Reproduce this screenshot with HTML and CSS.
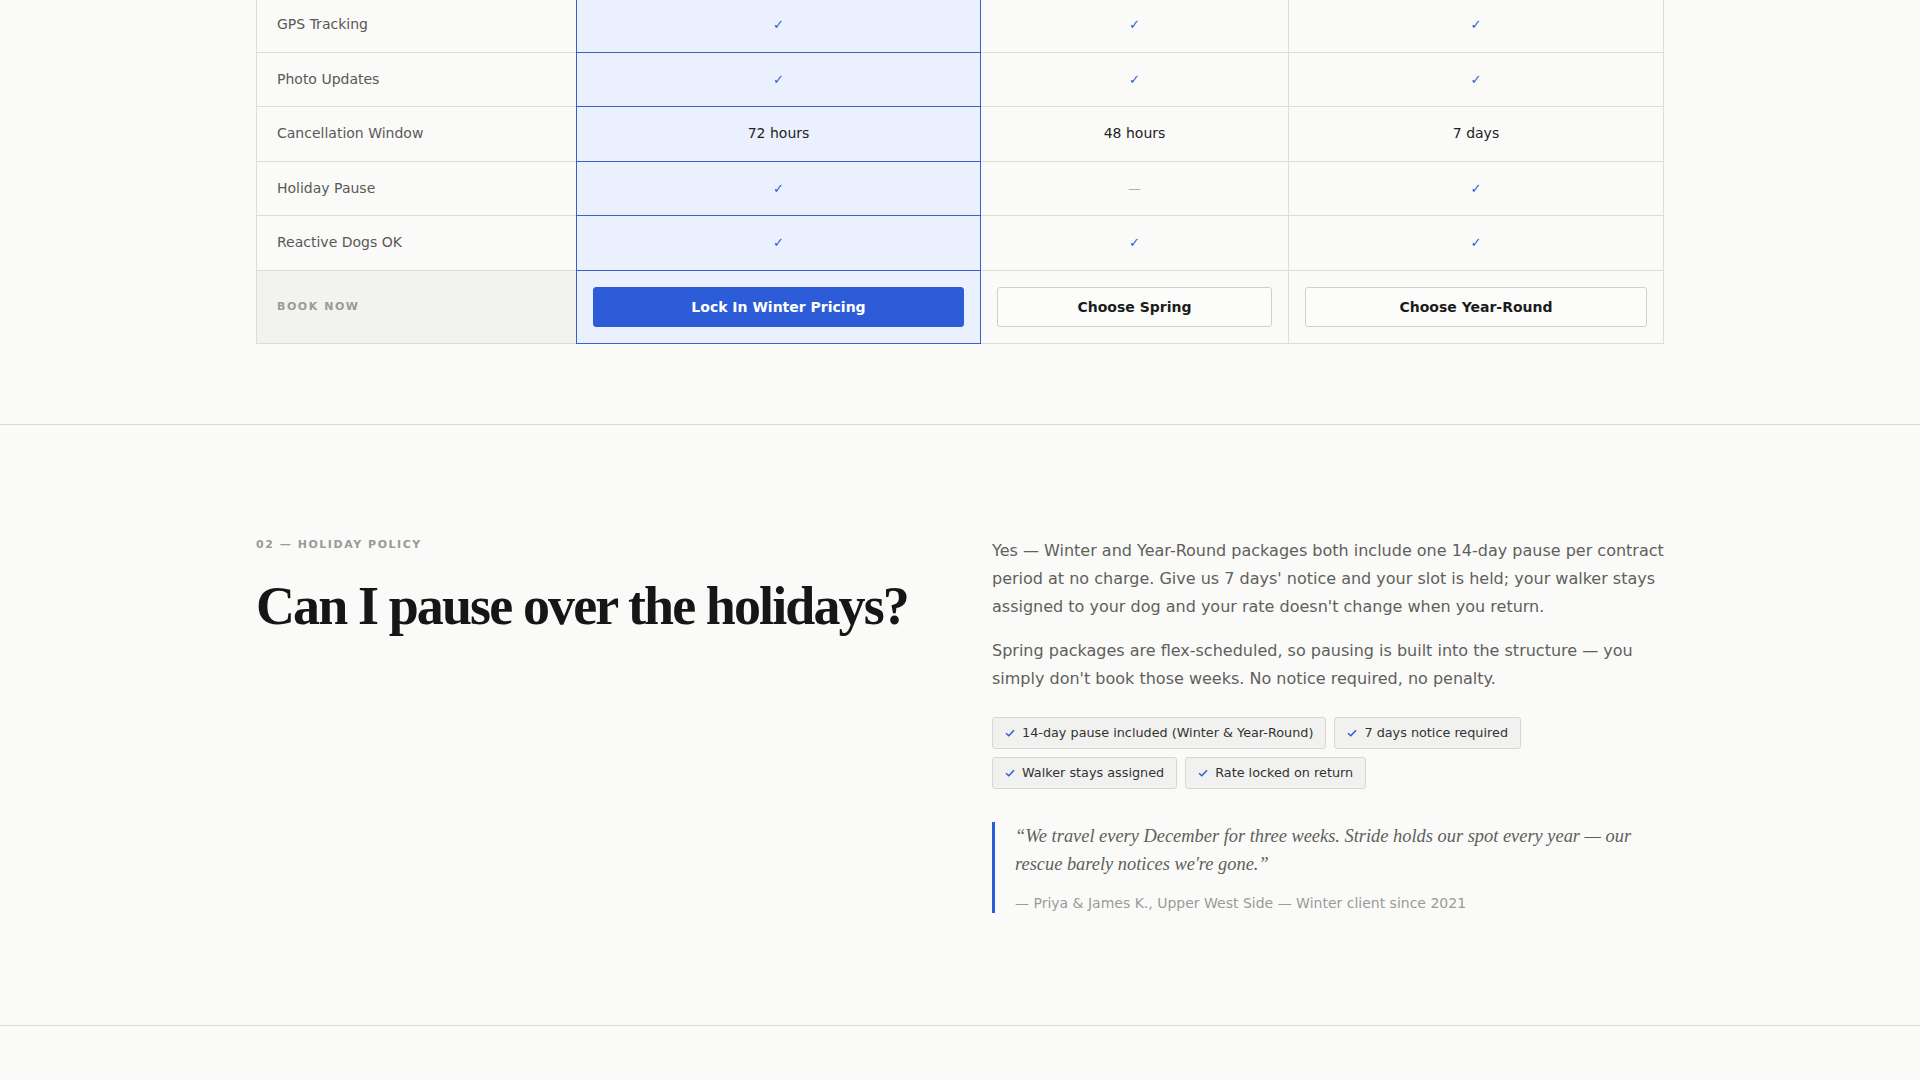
FILE: index.html
```html
<!DOCTYPE html>
<html>
<head lang="en">
    <meta charset="UTF-8">
    <title>Stride - Seasonal Packages</title>
    <link rel="stylesheet" href="styles.css">
</head>
<body>
<section class="compare">
    <div class="wrap">
        <table class="plans">
            <colgroup>
                <col class="col-feature">
                <col class="col-winter">
                <col class="col-spring">
                <col class="col-year">
            </colgroup>
            <tr>
                <td class="feature">GPS Tracking</td>
                <td class="hl"><span class="yes">&#10003;</span></td>
                <td><span class="yes">&#10003;</span></td>
                <td><span class="yes">&#10003;</span></td>
            </tr>
            <tr>
                <td class="feature">Photo Updates</td>
                <td class="hl"><span class="yes">&#10003;</span></td>
                <td><span class="yes">&#10003;</span></td>
                <td><span class="yes">&#10003;</span></td>
            </tr>
            <tr>
                <td class="feature">Cancellation Window</td>
                <td class="hl">72 hours</td>
                <td>48 hours</td>
                <td>7 days</td>
            </tr>
            <tr>
                <td class="feature">Holiday Pause</td>
                <td class="hl"><span class="yes">&#10003;</span></td>
                <td><span class="no">&mdash;</span></td>
                <td><span class="yes">&#10003;</span></td>
            </tr>
            <tr>
                <td class="feature">Reactive Dogs OK</td>
                <td class="hl"><span class="yes">&#10003;</span></td>
                <td><span class="yes">&#10003;</span></td>
                <td><span class="yes">&#10003;</span></td>
            </tr>
            <tr class="book">
                <td class="feature">Book now</td>
                <td class="hl"><button class="btn btn-primary">Lock In Winter Pricing</button></td>
                <td><button class="btn">Choose Spring</button></td>
                <td><button class="btn">Choose Year-Round</button></td>
            </tr>
        </table>
    </div>
</section>

<section class="faq">
    <div class="wrap faq-grid">
        <div class="faq-title">
            <div class="eyebrow">02 &mdash; Holiday Policy</div>
            <h2>Can I pause over the holidays?</h2>
        </div>
        <div class="faq-body">
            <p>Yes &mdash; Winter and Year-Round packages both include one 14-day pause per contract period at no charge. Give us 7 days' notice and your slot is held; your walker stays assigned to your dog and your rate doesn't change when you return.</p>
            <p>Spring packages are flex-scheduled, so pausing is built into the structure &mdash; you simply don't book those weeks. No notice required, no penalty.</p>
            <ul class="chips">
                <li><svg width="10" height="8" viewBox="0 0 10 8"><path d="M1 4.2 L3.8 6.8 L9 1.2" fill="none" stroke="#2c5cd8" stroke-width="1.5"/></svg>14-day pause included (Winter &amp; Year-Round)</li>
                <li><svg width="10" height="8" viewBox="0 0 10 8"><path d="M1 4.2 L3.8 6.8 L9 1.2" fill="none" stroke="#2c5cd8" stroke-width="1.5"/></svg>7 days notice required</li>
                <li><svg width="10" height="8" viewBox="0 0 10 8"><path d="M1 4.2 L3.8 6.8 L9 1.2" fill="none" stroke="#2c5cd8" stroke-width="1.5"/></svg>Walker stays assigned</li>
                <li><svg width="10" height="8" viewBox="0 0 10 8"><path d="M1 4.2 L3.8 6.8 L9 1.2" fill="none" stroke="#2c5cd8" stroke-width="1.5"/></svg>Rate locked on return</li>
            </ul>
            <blockquote class="quote">
                <p>&ldquo;We travel every December for three weeks. Stride holds our spot every year &mdash; our rescue barely notices we're gone.&rdquo;</p>
                <cite>&mdash; Priya &amp; James K., Upper West Side &mdash; Winter client since 2021</cite>
            </blockquote>
        </div>
    </div>
</section>
</body>
</html>
```

FILE: styles.css
```css
*{
    margin: 0;
    padding: 0;
    box-sizing: border-box;
}
body{
    background: #fafaf8;
    color: #222;
    font-family: "DejaVu Sans", sans-serif;
}
li{
    list-style: none;
}
.wrap{
    width: 1408px;
    margin: 0 auto;
}

/* comparison table */
.compare{
    margin-top: -2px;
    padding-bottom: 80px;
    border-bottom: 1px solid #d9d9d6;
}
.plans{
    width: 100%;
    table-layout: fixed;
    border-collapse: separate;
    border-spacing: 0;
    font-size: 14px;
}
.col-feature{ width: 320px; }
.col-winter{ width: 405px; }
.col-spring{ width: 308px; }
.col-year{ width: 375px; }
.plans td{
    padding: 18px 20px;
    line-height: 17.5px;
    text-align: center;
    color: #222;
    border-bottom: 1px solid #dcdcd9;
    border-right: 1px solid #dcdcd9;
}
.plans td.feature{
    text-align: left;
    color: #595956;
    border-left: 1px solid #dcdcd9;
    border-right: none;
}
.plans td.hl{
    background: #eaf0fd;
    border-left: 1px solid #3562c9;
    border-right: 1px solid #3562c9;
    border-bottom-color: #3562c9;
}
.plans td.hl + td{
    border-left: none;
}
.yes{
    color: #2c5cd8;
    font-size: 13px;
}
.no{
    color: #b0b0ad;
    font-size: 13px;
}
.plans .book td{
    padding: 16px;
}
.plans .book td.feature{
    background: #f2f2f0;
    padding-left: 20px;
    font-size: 11px;
    font-weight: bold;
    letter-spacing: 0.14em;
    text-transform: uppercase;
    color: #9a9a97;
}
.btn{
    display: block;
    width: 100%;
    height: 40px;
    font-family: "DejaVu Sans", sans-serif;
    font-size: 14px;
    font-weight: bold;
    color: #1c1c1c;
    background: #fcfcfb;
    border: 1px solid #cfcfcc;
    border-radius: 3px;
    cursor: pointer;
}
.btn-primary{
    background: #2c5cd8;
    border-color: #2c5cd8;
    color: #fff;
}

/* holiday policy */
.faq{
    padding: 112px 0;
    border-bottom: 1px solid #d9d9d6;
}
.faq-grid{
    display: grid;
    grid-template-columns: 1fr 1fr;
    gap: 64px;
    align-items: start;
}
.eyebrow{
    font-size: 11px;
    line-height: 16px;
    font-weight: bold;
    letter-spacing: 0.14em;
    text-transform: uppercase;
    color: #9a9a97;
}
.faq-title h2{
    margin-top: 24px;
    font-family: "Liberation Serif", "Times New Roman", serif;
    font-size: 54px;
    line-height: 1.1;
    letter-spacing: -0.035em;
    font-weight: bold;
    color: #161616;
}
.faq-body > p{
    font-size: 16px;
    line-height: 28px;
    color: #5f5f5c;
    margin-bottom: 16px;
}
.chips{
    display: flex;
    flex-wrap: wrap;
    gap: 8px;
    margin-top: 24px;
}
.chips li{
    display: flex;
    align-items: center;
    gap: 7px;
    height: 32px;
    padding: 0 12px;
    font-size: 12.8px;
    color: #333;
    background: #f1f1ef;
    border: 1px solid #d6d6d3;
    border-radius: 3px;
}
.quote{
    margin-top: 33px;
    padding-left: 20px;
    border-left: 3px solid #2c5cd8;
}
.quote p{
    font-family: "Liberation Serif", "Times New Roman", serif;
    font-style: italic;
    font-size: 18.4px;
    line-height: 28.5px;
    color: #5f5f5c;
}
.quote cite{
    display: block;
    margin-top: 14px;
    font-style: normal;
    font-size: 14px;
    line-height: 20px;
    color: #9a9a97;
}
```
